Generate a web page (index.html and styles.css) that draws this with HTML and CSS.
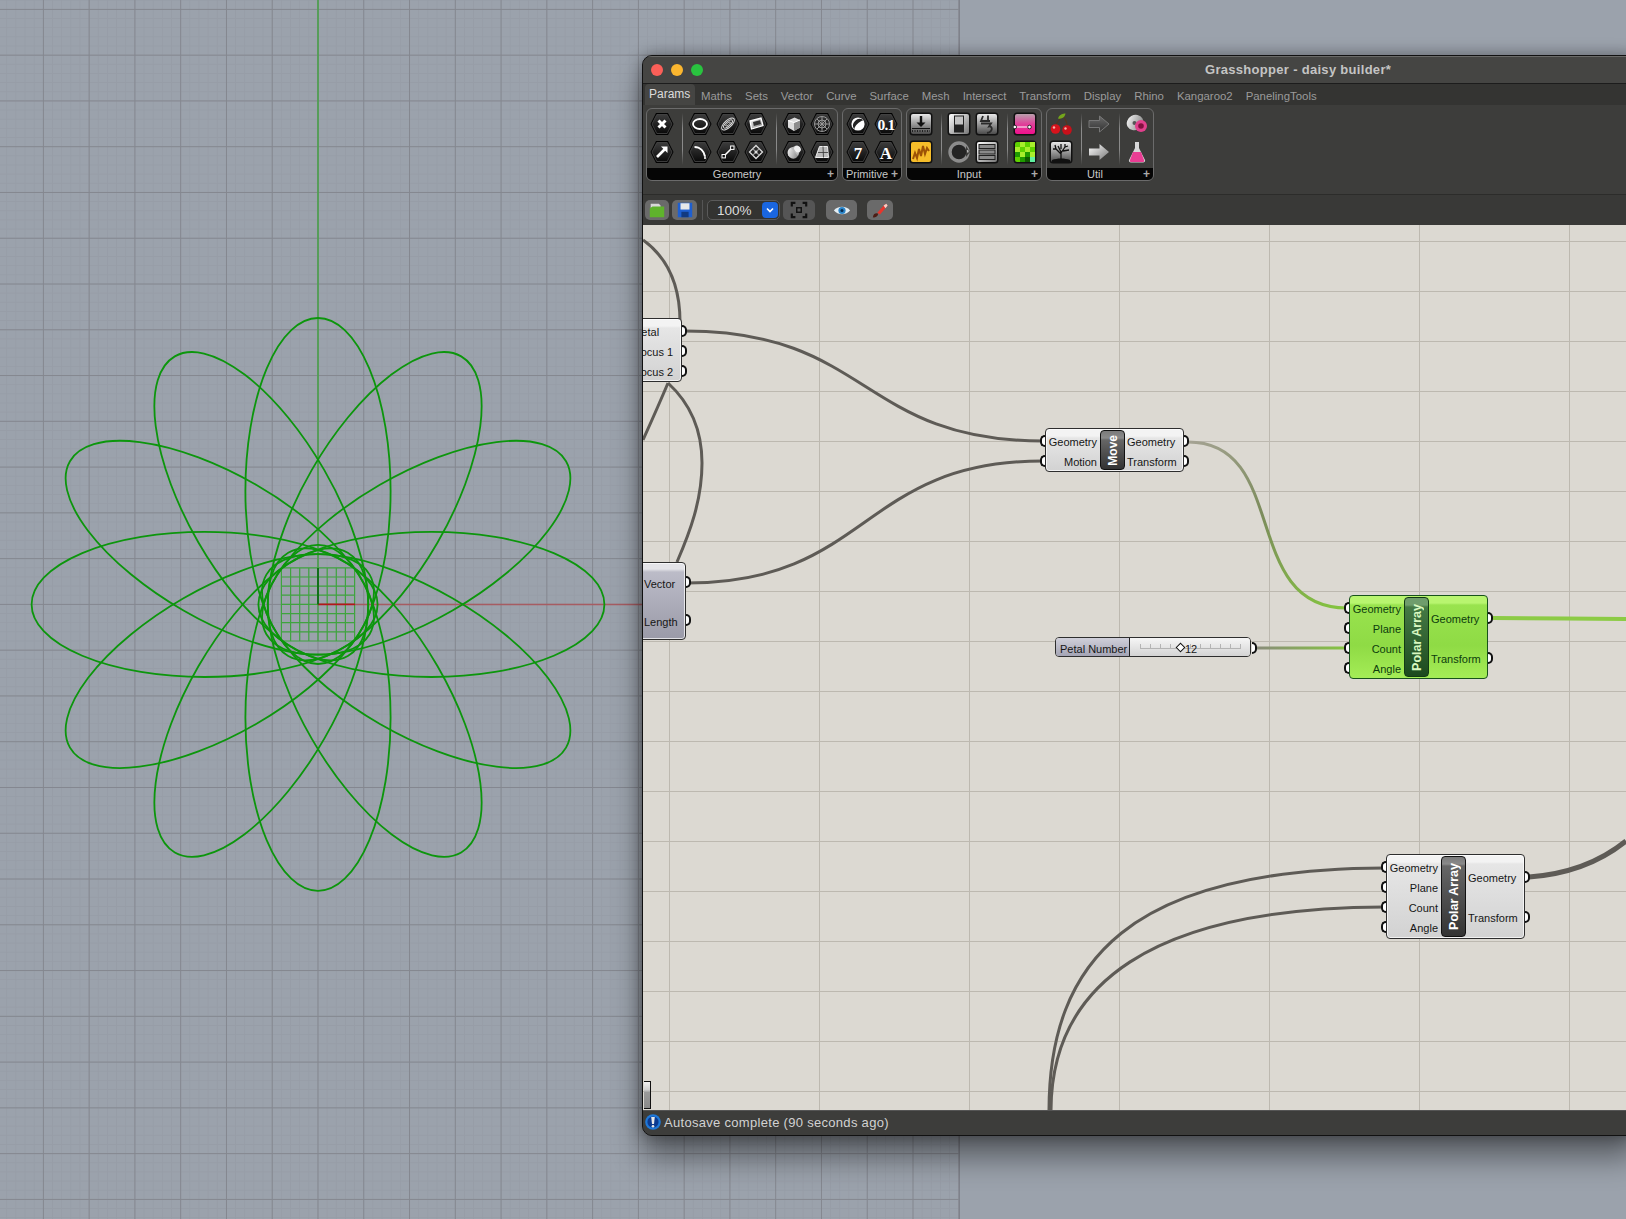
FILE: index.html
```html
<!DOCTYPE html>
<html lang="en">
<head>
    <meta charset="UTF-8">
    <title>Grasshopper - daisy builder</title>
    <link rel="stylesheet" href="styles.css">
</head>
<body>
<svg class="defs">
    <defs>
        <linearGradient id="hexfill" x1="0" y1="0" x2="0" y2="1"><stop offset="0" stop-color="#3c3c3c"/><stop offset="1" stop-color="#0a0a0a"/></linearGradient>
        <linearGradient id="tilefill" x1="0" y1="0" x2="0" y2="1"><stop offset="0" stop-color="#e8e8e8"/><stop offset="1" stop-color="#4c4c4c"/></linearGradient>
        <linearGradient id="whitefill" x1="0" y1="0" x2="1" y2="1"><stop offset="0" stop-color="#fff"/><stop offset="1" stop-color="#777"/></linearGradient>
        <linearGradient id="pinkfill" x1="0" y1="0" x2="0" y2="1"><stop offset="0" stop-color="#b9a0ac"/><stop offset="0.5" stop-color="#e0409a"/><stop offset="1" stop-color="#f0108c"/></linearGradient>
        <linearGradient id="arrowdark" x1="0" y1="0" x2="0" y2="1"><stop offset="0" stop-color="#6a6a6a"/><stop offset="1" stop-color="#333"/></linearGradient>
        <linearGradient id="wireA" gradientUnits="userSpaceOnUse" x1="1188" y1="441" x2="1347" y2="607"><stop offset="0" stop-color="#a5a394"/><stop offset="0.45" stop-color="#7c8c5c"/><stop offset="1" stop-color="#84c63e"/></linearGradient>
        <linearGradient id="wireB" gradientUnits="userSpaceOnUse" x1="1254" y1="647" x2="1347" y2="647"><stop offset="0" stop-color="#8a8a7c"/><stop offset="1" stop-color="#84c63e"/></linearGradient>
        <pattern id="minor" patternUnits="userSpaceOnUse" x="317.5" y="603.9" width="9.154" height="9.154"><path d="M0.500 0V9.154M0 0.500H9.154" fill="none" stroke="#979da7" stroke-width="1"/></pattern>
        <pattern id="major" patternUnits="userSpaceOnUse" x="317.5" y="603.9" width="45.77" height="45.77"><path d="M0.500 0V45.77M0 0.500H45.77" fill="none" stroke="#84878f" stroke-width="1"/></pattern>
        <symbol id="hex" viewBox="0 0 24 24"><polygon points="0.5,12 6,1 18,1 23.5,12 18,23 6,23" fill="#000"/><polygon points="2,12 6.8,2.5 17.2,2.5 22,12 17.2,21.5 6.8,21.5" fill="url(#hexfill)" stroke="#4a4a4a" stroke-width="0.8"/></symbol>
        <symbol id="tile" viewBox="0 0 24 24"><rect x="0.5" y="0.5" width="23" height="23" rx="3.5" fill="#111"/></symbol>
    </defs>
</svg>

<!-- Rhino viewport behind the window -->
<svg class="viewport" viewBox="0 0 960 1219">
    <rect width="960" height="1219" fill="url(#minor)"/>
    <rect width="960" height="1219" fill="url(#major)"/>
    <path d="M959.5 0V1219" stroke="#7f828b" fill="none"/>
    <path d="M355 604.4H642" stroke="#a65c62" stroke-width="1.5"/>
    <path d="M318 0V568" stroke="#4aa04a" stroke-width="1.6"/>
    <g class="flower">
        <path class="mini" d="M281.4 567.8H354.6M281.4 577H354.6M281.4 586.1H354.6M281.4 595.2H354.6M281.4 604.4H354.6M281.4 613.6H354.6M281.4 622.7H354.6M281.4 631.8H354.6M281.4 641H354.6M281.4 567.8V641M290.6 567.8V641M299.7 567.8V641M308.8 567.8V641M318 567.8V641M327.2 567.8V641M336.3 567.8V641M345.4 567.8V641M354.6 567.8V641"/>
        <ellipse cx="318" cy="491" rx="72.6" ry="173"/>
        <ellipse cx="318" cy="491" rx="72.6" ry="173" transform="rotate(30 318 604.4)"/>
        <ellipse cx="318" cy="491" rx="72.6" ry="173" transform="rotate(60 318 604.4)"/>
        <ellipse cx="318" cy="491" rx="72.6" ry="173" transform="rotate(90 318 604.4)"/>
        <ellipse cx="318" cy="491" rx="72.6" ry="173" transform="rotate(120 318 604.4)"/>
        <ellipse cx="318" cy="491" rx="72.6" ry="173" transform="rotate(150 318 604.4)"/>
        <ellipse cx="318" cy="491" rx="72.6" ry="173" transform="rotate(180 318 604.4)"/>
        <ellipse cx="318" cy="491" rx="72.6" ry="173" transform="rotate(210 318 604.4)"/>
        <ellipse cx="318" cy="491" rx="72.6" ry="173" transform="rotate(240 318 604.4)"/>
        <ellipse cx="318" cy="491" rx="72.6" ry="173" transform="rotate(270 318 604.4)"/>
        <ellipse cx="318" cy="491" rx="72.6" ry="173" transform="rotate(300 318 604.4)"/>
        <ellipse cx="318" cy="491" rx="72.6" ry="173" transform="rotate(330 318 604.4)"/>
    </g>
    <path d="M318 604.4H355" stroke="#b5161c" stroke-width="1.8"/>
    <path d="M318 604.4V568" stroke="#0b6b12" stroke-width="1.8"/>
</svg>

<div class="window">
    <div class="titlebar">
        <span class="light light-red"></span>
        <span class="light light-yellow"></span>
        <span class="light light-green"></span>
        <span class="title">Grasshopper - daisy builder*</span>
    </div>

    <div class="tabs">
        <span class="tab active">Params</span>
        <span class="tab">Maths</span>
        <span class="tab">Sets</span>
        <span class="tab">Vector</span>
        <span class="tab">Curve</span>
        <span class="tab">Surface</span>
        <span class="tab">Mesh</span>
        <span class="tab">Intersect</span>
        <span class="tab">Transform</span>
        <span class="tab">Display</span>
        <span class="tab">Rhino</span>
        <span class="tab">Kangaroo2</span>
        <span class="tab">PanelingTools</span>
    </div>

    <div class="ribbon">
        <div class="group group-geometry">
            <div class="cols">
                <div class="col">
                    <svg class="ico" viewBox="0 0 24 24"><use href="#hex"/><path d="M8.5 8.5L15.5 15.5M15.5 8.5L8.5 15.5" stroke="#fff" stroke-width="3"/></svg>
                    <svg class="ico" viewBox="0 0 24 24"><use href="#hex"/><path d="M7 17L16 8" stroke="#fff" stroke-width="2.6"/><path d="M11 6.5H17.5V13Z" fill="#fff"/></svg>
                </div>
                <div class="sep"></div>
                <div class="col">
                    <svg class="ico" viewBox="0 0 24 24"><use href="#hex"/><ellipse cx="12" cy="12" rx="7" ry="5" fill="none" stroke="#fff" stroke-width="1.8"/></svg>
                    <svg class="ico" viewBox="0 0 24 24"><use href="#hex"/><path d="M7 6.5C12 7 16 12 17.5 18" fill="none" stroke="#aaa" stroke-width="1"/><path d="M6.5 7C12 7 16 11 17 16.5" fill="none" stroke="#fff" stroke-width="2"/><path d="M17 16.5V19" stroke="#ccc" stroke-width="2"/></svg>
                </div>
                <div class="col">
                    <svg class="ico" viewBox="0 0 24 24"><use href="#hex"/><g fill="none" stroke="#ddd" transform="rotate(-42 12 12)"><ellipse cx="12" cy="12" rx="8" ry="3.6" stroke-width="1"/><ellipse cx="12" cy="12" rx="5.6" ry="2.2" stroke-width="1"/><ellipse cx="12" cy="12" rx="3" ry="1" stroke-width="0.8"/></g></svg>
                    <svg class="ico" viewBox="0 0 24 24"><use href="#hex"/><path d="M8 16L16 8" stroke="#fff" stroke-width="1.6"/><rect x="6" y="14.5" width="3.4" height="3.4" fill="#111" stroke="#fff"/><rect x="14.6" y="6" width="3.4" height="3.4" fill="#111" stroke="#fff"/></svg>
                </div>
                <div class="col">
                    <svg class="ico" viewBox="0 0 24 24"><use href="#hex"/><path d="M6 9L17 6L19 13.5L7.5 17Z" fill="url(#whitefill)" stroke="#fff" stroke-width="1.3"/><path d="M9 10L16 8.2L17 12L9.8 14Z" fill="#333"/></svg>
                    <svg class="ico" viewBox="0 0 24 24"><use href="#hex"/><path d="M12 5.5L18.5 12L12 18.5L5.5 12Z" fill="none" stroke="#ddd" stroke-width="1.3"/><path d="M8.7 8.7L15.3 15.3M15.3 8.7L8.7 15.3" stroke="#999" stroke-width="1.2"/><circle cx="12" cy="12" r="1.5" fill="#ddd"/></svg>
                </div>
                <div class="sep"></div>
                <div class="col">
                    <svg class="ico" viewBox="0 0 24 24"><use href="#hex"/><path d="M6 8.5L12.5 5.5L18 8V15.5L12 19L6 15.5Z" fill="#ddd"/><path d="M12 10.5V19L18 15.5V8Z" fill="#8c8c8c"/><path d="M6 8.5L12 10.5L18 8" fill="none" stroke="#fff"/></svg>
                    <svg class="ico" viewBox="0 0 24 24"><use href="#hex"/><ellipse cx="11" cy="13" rx="5.4" ry="5.8" fill="url(#whitefill)" transform="rotate(-25 11 13)"/><path d="M9 8L14 5.5L18.5 9.5L16 16Z" fill="#bbb"/><ellipse cx="15.5" cy="9" rx="3" ry="3.6" fill="#eee" transform="rotate(-40 15.5 9)"/></svg>
                </div>
                <div class="col">
                    <svg class="ico" viewBox="0 0 24 24"><use href="#hex"/><g stroke="#999" stroke-width="1" fill="none"><circle cx="12" cy="12" r="7.5"/><circle cx="12" cy="12" r="4"/><path d="M5 12H19M12 5V19M7 7L17 17M17 7L7 17"/></g></svg>
                    <svg class="ico" viewBox="0 0 24 24"><use href="#hex"/><path d="M9.5 6.5H17.5L18.5 17.5H5.5Z" fill="#bbb" stroke="#eee"/><path d="M13 6.5L13.5 17.5M8 12.5H18" stroke="#333" stroke-width="0.8"/></svg>
                </div>
            </div>
            <div class="group-foot"><span>Geometry</span><b class="plus">+</b></div>
        </div>

        <div class="group group-primitive">
            <div class="cols">
                <div class="col">
                    <svg class="ico" viewBox="0 0 24 24"><use href="#hex"/><circle cx="12" cy="12" r="6.6" fill="#fff"/><path d="M6.5 15.7A6.6 6.6 0 0 0 15.7 6.500C15.500 10 11 14.500 6.500 15.700Z" fill="#222" transform="rotate(180 12 12)"/></svg>
                    <svg class="ico" viewBox="0 0 24 24"><use href="#hex"/><text class="ico-num" x="12" y="18.5">7</text></svg>
                </div>
                <div class="col">
                    <svg class="ico" viewBox="0 0 24 24"><use href="#hex"/><text class="ico-dec" x="12" y="17.500">0.1</text></svg>
                    <svg class="ico" viewBox="0 0 24 24"><use href="#hex"/><text class="ico-num" x="12" y="18.5">A</text></svg>
                </div>
            </div>
            <div class="group-foot"><span>Primitive</span><b class="plus">+</b></div>
        </div>

        <div class="group group-input">
            <div class="cols">
                <div class="col">
                    <svg class="ico" viewBox="0 0 24 24"><use href="#tile"/><rect x="2" y="2" width="20" height="20" rx="2" fill="url(#tilefill)"/><path d="M12 4V12" stroke="#111" stroke-width="2.4"/><path d="M7.5 10.5H16.5L12 15Z" fill="#111"/><path d="M3 16.5H21" stroke="#111" stroke-width="1.2"/><path d="M3 19H21" stroke="#222" stroke-width="2" stroke-dasharray="1 1.5"/></svg>
                    <svg class="ico" viewBox="0 0 24 24"><use href="#tile"/><rect x="2" y="2" width="20" height="20" rx="2" fill="#f6bd2a"/><path d="M4 19L6 13L8 18L10 9L12 16L14 6L16 14L18 8L20 11" fill="none" stroke="#9c5206" stroke-width="2"/></svg>
                </div>
                <div class="sep"></div>
                <div class="col">
                    <svg class="ico" viewBox="0 0 24 24"><use href="#tile"/><rect x="2" y="2" width="20" height="20" rx="2" fill="url(#whitefill)"/><rect x="7" y="3.5" width="10" height="17" fill="#222"/><rect x="8" y="4.5" width="8" height="8" fill="#c4c4c4"/></svg>
                    <svg class="ico" viewBox="0 0 24 24"><circle cx="12" cy="12" r="9" fill="#242424" stroke="#8c8c8c" stroke-width="3.4"/><path d="M19 6L23 12L19 17Z" fill="#3c3c3a"/><path d="M20.5 10L21 12.5" stroke="#bbb" stroke-width="1.5"/></svg>
                </div>
                <div class="col">
                    <svg class="ico" viewBox="0 0 24 24"><use href="#tile"/><rect x="2" y="2" width="20" height="20" rx="2" fill="url(#tilefill)"/><path d="M8 4L6 9H15M13 3.5V10M6 11.5H16L14 14.5C18 14 18 20 12 21" fill="none" stroke="#2a2a2a" stroke-width="1.8"/></svg>
                    <svg class="ico" viewBox="0 0 24 24"><use href="#tile"/><rect x="2" y="2" width="20" height="20" rx="2" fill="url(#whitefill)"/><g fill="#8a8a8a" stroke="#222"><rect x="4" y="4.5" width="16" height="4"/><rect x="4" y="10" width="16" height="4"/><rect x="4" y="15.5" width="16" height="4"/></g></svg>
                </div>
                <div class="sep"></div>
                <div class="col">
                    <svg class="ico" viewBox="0 0 24 24"><use href="#tile"/><rect x="2" y="2" width="20" height="20" rx="2" fill="url(#pinkfill)"/><path d="M1 15H17" stroke="#fff"/><circle cx="1.8" cy="15" r="1.8" fill="#fff" stroke="#111" stroke-width="0.8"/><circle cx="16.5" cy="15" r="1.8" fill="#fff" stroke="#111" stroke-width="0.8"/></svg>
                    <svg class="ico" viewBox="0 0 24 24"><use href="#tile"/><rect x="2" y="2" width="20" height="20" rx="2" fill="#5fd200"/><path d="M7 2H12V7H7ZM17 2H22V7H17ZM2 7H7V12H2ZM12 7H17V12H12ZM7 12H12V17H7ZM17 12H22V17H17Z" fill="#a8ee2c"/><path d="M12 12H17V17H12ZM2 12H7V17H2ZM7 17H12V22H7Z" fill="#1f9a00"/><path d="M12 17H17V22H12Z" fill="#0f5a00"/><path d="M17 17H22V22H17Z" fill="#60f0a0"/></svg>
                </div>
            </div>
            <div class="group-foot"><span>Input</span><b class="plus">+</b></div>
        </div>

        <div class="group group-util">
            <div class="cols">
                <div class="col">
                    <svg class="ico" viewBox="0 0 24 24"><path d="M14 4C10 8 7 11 6.5 15M14 4C17 8 18.5 12 18.5 16" fill="none" stroke="#5a3418" stroke-width="1"/><path d="M9 6.5C10 2.5 14 1.5 16.5 1.5C16 5 13 7.5 9 6.5Z" fill="#74a51c"/><circle cx="6.5" cy="17" r="4.8" fill="#d8131c"/><circle cx="18" cy="18" r="4.8" fill="#c8101a"/><circle cx="5" cy="15.5" r="1.2" fill="#f8b0a8"/><circle cx="16.5" cy="16.5" r="1.2" fill="#f8b0a8"/></svg>
                    <svg class="ico" viewBox="0 0 24 24"><use href="#tile"/><rect x="2" y="2" width="20" height="20" rx="2" fill="url(#tilefill)"/><path d="M12 20V11M12 14L7 9M7 9L4 9M7 9L6 5M12 12L9 6M12 13L16 7M16 7L19 6M16 7L16 4M14 11L20 10M12 9L12 4" stroke="#111" stroke-width="1.3" fill="none"/><path d="M3 20C8 18 16 18 21 20V22H3Z" fill="#111"/></svg>
                </div>
                <div class="sep"></div>
                <div class="col">
                    <svg class="ico" viewBox="0 0 24 24"><path d="M2 8.5H12.5V4L22 12L12.5 20V15.5H2Z" fill="url(#arrowdark)" stroke="#777"/></svg>
                    <svg class="ico" viewBox="0 0 24 24"><path d="M2 8.5H12.5V4L22 12L12.5 20V15.5H2Z" fill="url(#whitefill)"/></svg>
                </div>
                <div class="sep"></div>
                <div class="col">
                    <svg class="ico" viewBox="0 0 24 24"><ellipse cx="10" cy="10.5" rx="8.5" ry="7.5" fill="url(#whitefill)" transform="rotate(-30 10 10.5)"/><circle cx="9.5" cy="11" r="2" fill="#555"/><circle cx="16" cy="14" r="6" fill="#e0408c"/><circle cx="16" cy="14" r="2.8" fill="#80103f"/></svg>
                    <svg class="ico" viewBox="0 0 24 24"><path d="M10 2H14V8L20 20C20.5 21.5 19.5 22.5 18 22.5H6C4.500 22.500 3.500 21.500 4 20L10 8Z" fill="#d8d8d8"/><path d="M8 12H16L19 20C19.500 21.500 18.500 22 18 22H6C5.500 22 4.500 21.500 5 20Z" fill="#ea3d94"/></svg>
                </div>
            </div>
            <div class="group-foot"><span>Util</span><b class="plus">+</b></div>
        </div>
    </div>

    <div class="toolbar">
        <button class="tool tool-file">
            <svg viewBox="0 0 20 20" width="18" height="18"><path d="M3 3H12L14 5V8H3Z" fill="#d8d8d8"/><path d="M2 8L5 6H18V18H2Z" fill="#5fb32c"/></svg>
        </button>
        <button class="tool tool-save">
            <svg viewBox="0 0 20 20" width="18" height="18"><path d="M2 2H18V18H2Z" fill="#1e5fd0"/><rect x="5" y="2.500" width="10" height="7" fill="#e8e8e8"/><rect x="6" y="12" width="8" height="6" fill="#123a80"/></svg>
        </button>
        <div class="tool-sep"></div>
        <div class="zoombox">
            <span class="zoomvalue">100%</span>
            <span class="zoomarrow"><svg viewBox="0 0 10 10" width="10" height="10"><path d="M2 3.500L5 6.500L8 3.500" fill="none" stroke="#fff" stroke-width="1.600"/></svg></span>
        </div>
        <button class="tool tool-focus">
            <svg viewBox="0 0 20 20" width="18" height="18"><path d="M2 6V2H6M14 2H18V6M18 14V18H14M6 18H2V14" fill="none" stroke="#111" stroke-width="2.400"/><rect x="7.500" y="7.500" width="5" height="5" fill="none" stroke="#111" stroke-width="1.600"/></svg>
        </button>
        <button class="tool tool-eye">
            <svg viewBox="0 0 20 14" width="18" height="13"><path d="M1 7C5 1.500 15 1.500 19 7C15 12.500 5 12.500 1 7Z" fill="#e4eef4"/><circle cx="10" cy="7" r="4" fill="#2a84c8"/><circle cx="10" cy="7" r="1.700" fill="#0c2c4c"/></svg>
        </button>
        <button class="tool tool-brush">
            <svg viewBox="0 0 20 20" width="18" height="18"><path d="M2 18C3 13 6 13 8 14C8 17 5 19 2 18Z" fill="#4c1c14"/><path d="M7 13L16 3L18.500 5L10 15Z" fill="#e8352c"/><path d="M14 5L17 3L18.500 5L16 8Z" fill="#f4d0c8"/></svg>
        </button>
    </div>

    <div class="canvas">
        <svg class="wires" viewBox="643 225 983 886">
            <path d="M643 240C668 258 680 285 680 322"/>
            <path d="M643 440C652 420 660 402 668 383"/>
            <path d="M668 383C692 405 702 432 702 463C702 500 690 532 677 562"/>
            <path d="M685 331C870 331 860 441 1043 441"/>
            <path d="M687 583C870 583 860 461 1043 461"/>
            <path d="M1049 1111C1049 960 1130 869 1384 868"/>
            <path d="M1051 1111C1051 985 1150 908 1384 907"/>
            <path class="wire-fat" d="M1529 877C1570 874 1600 862 1626 841"/>
            <path class="wire-a" d="M1188 442C1290 442 1240 608 1347 608"/>
            <path class="wire-b" d="M1254 648H1347"/>
            <path class="wire-green" d="M1493 618C1540 618 1580 619 1626 619"/>
        </svg>

        <div class="node node-petal">
            <div class="side side-left">
                <span class="pin-out">Petal</span>
                <span class="pin-out">Focus 1</span>
                <span class="pin-out">Focus 2</span>
            </div>
        </div>

        <div class="node node-vector">
            <div class="side side-left">
                <span class="pin-out">Vector</span>
                <span class="pin-out">Length</span>
            </div>
        </div>

        <div class="node node-move">
            <div class="inputs"><span class="pin-in">Geometry</span><span class="pin-in">Motion</span></div>
            <div class="capsule"><span>Move</span></div>
            <div class="outputs"><span class="pin-out">Geometry</span><span class="pin-out">Transform</span></div>
        </div>

        <div class="slider">
            <div class="slider-label">Petal Number</div>
            <div class="slider-track pin-out">
                <div class="rail"></div>
                <span class="knob"></span>
                <span class="slider-value">12</span>
            </div>
        </div>

        <div class="node node-polar node-polar-on">
            <div class="inputs"><span class="pin-in">Geometry</span><span class="pin-in">Plane</span><span class="pin-in">Count</span><span class="pin-in">Angle</span></div>
            <div class="capsule"><span>Polar Array</span></div>
            <div class="outputs"><span class="pin-out">Geometry</span><span class="pin-out">Transform</span></div>
        </div>

        <div class="node node-polar node-polar-off">
            <div class="inputs"><span class="pin-in">Geometry</span><span class="pin-in">Plane</span><span class="pin-in">Count</span><span class="pin-in">Angle</span></div>
            <div class="capsule"><span>Polar Array</span></div>
            <div class="outputs"><span class="pin-out">Geometry</span><span class="pin-out">Transform</span></div>
        </div>

        <div class="scrollstub"></div>
    </div>

    <div class="statusbar">
        <svg viewBox="0 0 16 16" width="16" height="16"><circle cx="8" cy="8" r="7.800" fill="#1f78d8"/><circle cx="8" cy="8" r="5.600" fill="#0c3a90"/><path d="M6.200 3H9.800L9 10H7Z" fill="#e8e8e8"/><circle cx="8" cy="12.300" r="1.300" fill="#e8e8e8"/></svg>
        <span>Autosave complete (90 seconds ago)</span>
    </div>
</div>
</body>
</html>
```

FILE: styles.css
```css
/* General */
body {
    margin: 0;
    width: 1626px;
    height: 1219px;
    overflow: hidden;
    position: relative;
    background: #9ba2ac;
    font-family: 'Liberation Sans', Arial, sans-serif;
}

.defs {
    position: absolute;
    width: 0;
    height: 0;
}

/* Rhino viewport */
.viewport {
    display: block;
    width: 960px;
    height: 1219px;
}

.flower ellipse {
    fill: none;
    stroke: #0c960c;
    stroke-width: 1.8;
}

.flower .mini {
    fill: none;
    stroke: #3fa43f;
    stroke-width: 1.2;
}

/* Window */
.window {
    position: absolute;
    left: 642px;
    top: 55px;
    right: -12px;
    height: 1079px;
    display: flex;
    flex-direction: column;
    border: 1px solid #111;
    border-radius: 10px;
    overflow: hidden;
    background: #3d3d3b;
    box-shadow: 0 22px 30px rgba(0, 0, 0, 0.42), 0 0 16px rgba(0, 0, 0, 0.38);
}

.titlebar {
    height: 28px;
    flex: none;
    display: flex;
    align-items: center;
    padding: 0 0 1px 8px;
    background: #454543;
    border-top: 1px solid #6a6a68;
    box-sizing: border-box;
    border-bottom: 1px solid #1c1c1c;
}

.light {
    width: 12px;
    height: 12px;
    border-radius: 50%;
    margin-right: 8px;
}

.light-red { background: #fb5f58; }
.light-yellow { background: #fbb62f; }
.light-green { background: #29c33f; }

.title {
    margin-left: 494px;
    font-size: 13px;
    font-weight: bold;
    letter-spacing: 0.3px;
    color: #c4c4c4;
}

.tabs {
    height: 21px;
    flex: none;
    display: flex;
    align-items: center;
    gap: 13px;
    padding: 2px 0 0 2px;
    box-sizing: border-box;
    background: #343432;
    font-size: 11.4px;
    color: #9b9b9b;
}

.tab.active {
    align-self: stretch;
    display: flex;
    align-items: center;
    margin-top: -2px;
    padding: 0 6px 2px 4px;
    width: 40px;
    font-size: 12px;
    color: #dcdcdc;
    background: #454543;
    border-radius: 4px 4px 0 0;
    margin-right: -7px;
}

/* Ribbon */
.ribbon {
    height: 90px;
    flex: none;
    box-sizing: border-box;
    display: flex;
    align-items: flex-start;
    gap: 4px;
    padding: 3px 0 0 3px;
    background: #3d3d3b;
    border-bottom: 1px solid #2c2c2a;
}

.group {
    height: 73px;
    box-sizing: border-box;
    display: flex;
    flex-direction: column;
    border: 1px solid #6b6b6b;
    border-radius: 6px;
    overflow: hidden;
}

.group-geometry { width: 192px; }
.group-primitive { width: 60px; }
.group-input { width: 136px; }
.group-util { width: 108px; }

.cols {
    flex: 1;
    display: flex;
    gap: 4px;
    padding: 3px 0 0 3px;
}

.group-input .cols,
.group-util .cols {
    padding-left: 2px;
}

.col {
    width: 24px;
    display: flex;
    flex-direction: column;
    gap: 4px;
}

.ico {
    display: block;
    width: 24px;
    height: 24px;
}

.ico-num,
.ico-dec {
    font-family: 'Liberation Serif', serif;
    font-weight: bold;
    fill: #fff;
    text-anchor: middle;
}

.ico-num { font-size: 17px; }
.ico-dec { font-size: 15.5px; letter-spacing: -0.8px; }

.sep {
    width: 1px;
    height: 52px;
    margin: 1px 1px 0 4px;
    background: linear-gradient(#3d3d3b, #8a8a8a 30%, #8a8a8a 70%, #3d3d3b);
}

.group-foot {
    height: 12px;
    flex: none;
    position: relative;
    box-sizing: border-box;
    padding-right: 10px;
    background: #050505;
    color: #c8c8c8;
    font-size: 11px;
    line-height: 13px;
    text-align: center;
}

.plus {
    position: absolute;
    right: 3px;
    top: 0;
    font-size: 12px;
    color: #aaa;
}

/* Toolbar */
.toolbar {
    height: 30px;
    flex: none;
    box-sizing: border-box;
    display: flex;
    align-items: center;
    padding-left: 2px;
    background: #393937;
}

.tool {
    height: 20px;
    padding: 0;
    border: none;
    border-radius: 5px;
    background: #6a6a6a;
    display: flex;
    align-items: center;
    justify-content: center;
}

.tool-file { width: 24px; }
.tool-save { width: 25px; margin-left: 3px; }
.tool-focus { width: 32px; margin-left: 3px; background: #555; }
.tool-eye { width: 31px; margin-left: 11px; }
.tool-brush { width: 26px; margin-left: 10px; }

.tool-sep {
    width: 1px;
    height: 20px;
    margin: 0 4px 0 5px;
    background: #555;
}

.zoombox {
    width: 73px;
    height: 20px;
    box-sizing: border-box;
    display: flex;
    align-items: center;
    justify-content: space-between;
    padding: 0 1px 0 9px;
    border: 1px solid #5a5a5a;
    border-radius: 5px;
    background: #333331;
    color: #dedede;
    font-size: 13.5px;
}

.zoomarrow {
    width: 16px;
    height: 16px;
    border-radius: 4px;
    background: #1a66e0;
    display: flex;
    align-items: center;
    justify-content: center;
}

/* Canvas */
.canvas {
    flex: 1;
    position: relative;
    overflow: hidden;
    background-color: #dcd9d2;
    background-image:
        linear-gradient(to right, #bdb9b0 1px, transparent 1px),
        linear-gradient(to bottom, #bdb9b0 1px, transparent 1px);
    background-size: 150px 100%, 100% 50px;
    background-position: 26px 0, 0 16px;
}

.wires {
    position: absolute;
    left: 0;
    top: 0;
    width: 983px;
    height: 886px;
}

.wires path {
    fill: none;
    stroke: #5e5b56;
    stroke-width: 3;
}

.wires .wire-fat { stroke-width: 5; }
.wires .wire-a { stroke: url(#wireA); }
.wires .wire-b { stroke: url(#wireB); }
.wires .wire-green { stroke: #8ccb45; stroke-width: 4; }

/* Components */
.node {
    position: absolute;
    box-sizing: border-box;
    display: flex;
    border: 1px solid #2e2e2e;
    border-radius: 4px;
    font-size: 11px;
    color: #161616;
    background: linear-gradient(#f3f3f3, #f3f3f3 7px, #e6e6e6 9px, #d2d2d2);
    box-shadow: inset 0 0 0 1px rgba(255, 255, 255, 0.7);
}

.node span[class^="pin"] {
    position: relative;
    display: block;
    height: 20px;
    line-height: 22px;
}

.inputs,
.outputs {
    padding-top: 2px;
}

.inputs {
    width: 54px;
    text-align: right;
    padding-right: 3px;
    box-sizing: border-box;
}

.outputs {
    flex: 1;
    padding-left: 2px;
}

.node-polar .outputs span {
    height: 40px;
    line-height: 42px;
}

.capsule {
    width: 25px;
    margin: 1px 0;
    box-sizing: border-box;
    display: flex;
    align-items: center;
    justify-content: center;
    border: 1px solid #111;
    border-radius: 4px;
    background: linear-gradient(#7a7a7a, #8a8a8a 7px, #666 9px, #333);
    color: #fff;
    font-size: 12.5px;
    font-weight: bold;
}

.capsule span {
    writing-mode: vertical-rl;
    transform: rotate(180deg);
}

.pin-in::before,
.pin-out::after {
    content: "";
    position: absolute;
    top: 50%;
    width: 3px;
    height: 8px;
    margin-top: -6px;
    background: #fff;
    border: 2px solid #111;
}

.pin-in::before {
    left: -6px;
    border-right: 0;
    border-radius: 6px 0 0 6px;
}

.pin-out::after {
    right: -6px;
    border-left: 0;
    border-radius: 0 6px 6px 0;
}

.node-petal {
    left: -13px;
    top: 93px;
    width: 52px;
    height: 64px;
    padding-top: 2px;
}

.side-left {
    flex: 1;
    padding-left: 3px;
}

.node-vector {
    left: -20px;
    top: 337px;
    width: 63px;
    height: 78px;
    background: linear-gradient(#e4e4e8, #e4e4e8 6px, #bcbcc8 9px, #9a9aa8);
}

.node-vector .side-left {
    padding-left: 20px;
}

.node-vector .side-left span {
    height: 38px;
    line-height: 42px;
}

.node-move {
    left: 402px;
    top: 203px;
    width: 139px;
    height: 44px;
}

.node-move .capsule {
    font-size: 12px;
}

.node-polar {
    width: 139px;
    height: 84px;
}

.node-polar-on {
    left: 706px;
    top: 370px;
    color: #0d3d0d;
    border-color: #17521b;
    background: linear-gradient(#b8f56f, #b8f56f 7px, #99e34e 9px, #8fdb45 60%, #a4ec56);
    box-shadow: none;
}

.node-polar-on .capsule {
    background: linear-gradient(#6f9d6c, #6f9d6c 7px, #457a45 9px, #1c4a1e);
    border-color: #123a14;
    color: #d8f8c0;
}

.node-polar-off {
    left: 743px;
    top: 629px;
    height: 85px;
}

/* Slider */
.slider {
    position: absolute;
    left: 412px;
    top: 412px;
    width: 196px;
    height: 20px;
    box-sizing: border-box;
    display: flex;
    border: 1px solid #2e2e2e;
    border-radius: 4px;
    font-size: 11px;
    color: #161616;
}

.slider-label {
    width: 74px;
    padding-left: 4px;
    box-sizing: border-box;
    line-height: 22px;
    border-right: 1px solid #222;
    border-radius: 3px 0 0 3px;
    background: linear-gradient(#d0d0da, #a4a4b4);
}

.slider-track {
    flex: 1;
    position: relative;
    border-radius: 0 3px 3px 0;
    background: linear-gradient(#f6f6f6, #d4d4d4);
}

.slider-track.pin-out::after {
    right: -7px;
    margin-top: -5px;
}

.rail {
    position: absolute;
    left: 10px;
    right: 9px;
    top: 6px;
    height: 4px;
    border-bottom: 1px solid #b4b4b4;
    background: repeating-linear-gradient(to right, #b4b4b4 0, #b4b4b4 1px, transparent 1px, transparent 10px);
}

.knob {
    position: absolute;
    left: 47px;
    top: 6px;
    width: 5px;
    height: 5px;
    background: #fff;
    border: 1.5px solid #111;
    transform: rotate(45deg);
}

.slider-value {
    position: absolute;
    left: 55px;
    top: 5px;
    line-height: 13px;
}

.scrollstub {
    position: absolute;
    left: 1px;
    top: 856px;
    width: 6px;
    height: 26px;
    border: 1px solid #111;
    border-left: 0;
    background: linear-gradient(#f2f2f2, #d0d0d0 30%, #9a9a9a 40%, #8a8a8a);
}

/* Status bar */
.statusbar {
    height: 25px;
    flex: none;
    box-sizing: border-box;
    display: flex;
    align-items: center;
    gap: 3px;
    padding: 0 0 2px 2px;
    background: #3d3d3b;
    border-top: 1px solid #555;
    color: #d2d2d2;
    font-size: 13px;
    letter-spacing: 0.3px;
}
```
